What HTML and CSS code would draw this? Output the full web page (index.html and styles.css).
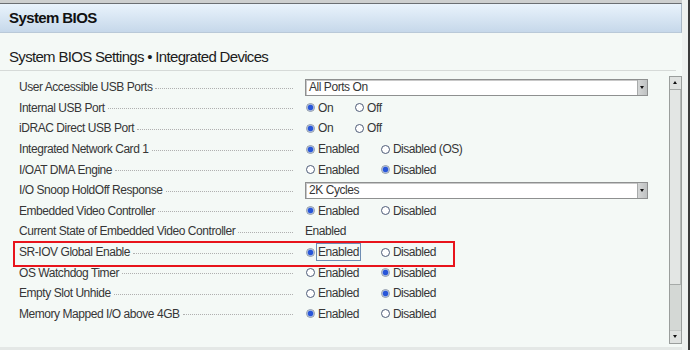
FILE: index.html
```html
<!DOCTYPE html>
<html>
<head>
<meta charset="utf-8">
<link rel="stylesheet" href="styles.css">
</head>
<body>
<div class="window">
  <div class="main">
    <div class="topstrip"></div>
    <div class="header">System BIOS</div>
    <div class="content">
      <div class="title">System BIOS Settings • Integrated Devices</div>
      <div class="body">
        <div class="rows">
          <div class="row">
            <div class="label"><span>User Accessible USB Ports</span><i class="leader"></i></div>
            <div class="ctrl"><div class="select"><span>All Ports On</span><b class="arrow"></b></div></div>
          </div>
          <div class="row">
            <div class="label"><span>Internal USB Port</span><i class="leader"></i></div>
            <div class="ctrl"><span class="opt"><i class="radio on"></i><span>On</span></span><span class="opt"><i class="radio"></i><span>Off</span></span></div>
          </div>
          <div class="row">
            <div class="label"><span>iDRAC Direct USB Port</span><i class="leader"></i></div>
            <div class="ctrl"><span class="opt"><i class="radio on"></i><span>On</span></span><span class="opt"><i class="radio"></i><span>Off</span></span></div>
          </div>
          <div class="row">
            <div class="label"><span>Integrated Network Card 1</span><i class="leader"></i></div>
            <div class="ctrl"><span class="opt"><i class="radio on"></i><span>Enabled</span></span><span class="opt"><i class="radio"></i><span>Disabled (OS)</span></span></div>
          </div>
          <div class="row">
            <div class="label"><span>I/OAT DMA Engine</span><i class="leader"></i></div>
            <div class="ctrl"><span class="opt"><i class="radio"></i><span>Enabled</span></span><span class="opt"><i class="radio on"></i><span>Disabled</span></span></div>
          </div>
          <div class="row">
            <div class="label"><span>I/O Snoop HoldOff Response</span><i class="leader"></i></div>
            <div class="ctrl"><div class="select"><span>2K Cycles</span><b class="arrow"></b></div></div>
          </div>
          <div class="row">
            <div class="label"><span>Embedded Video Controller</span><i class="leader"></i></div>
            <div class="ctrl"><span class="opt"><i class="radio on"></i><span>Enabled</span></span><span class="opt"><i class="radio"></i><span>Disabled</span></span></div>
          </div>
          <div class="row">
            <div class="label"><span>Current State of Embedded Video Controller</span><i class="leader"></i></div>
            <div class="ctrl"><span class="value">Enabled</span></div>
          </div>
          <div class="row marked">
            <div class="label"><span>SR-IOV Global Enable</span><i class="leader"></i></div>
            <div class="ctrl"><span class="opt"><i class="radio on"></i><span class="focus">Enabled</span></span><span class="opt"><i class="radio"></i><span>Disabled</span></span></div>
          </div>
          <div class="row">
            <div class="label"><span>OS Watchdog Timer</span><i class="leader"></i></div>
            <div class="ctrl"><span class="opt"><i class="radio"></i><span>Enabled</span></span><span class="opt"><i class="radio on"></i><span>Disabled</span></span></div>
          </div>
          <div class="row">
            <div class="label"><span>Empty Slot Unhide</span><i class="leader"></i></div>
            <div class="ctrl"><span class="opt"><i class="radio"></i><span>Enabled</span></span><span class="opt"><i class="radio on"></i><span>Disabled</span></span></div>
          </div>
          <div class="row">
            <div class="label"><span>Memory Mapped I/O above 4GB</span><i class="leader"></i></div>
            <div class="ctrl"><span class="opt"><i class="radio on"></i><span>Enabled</span></span><span class="opt"><i class="radio"></i><span>Disabled</span></span></div>
          </div>
        </div>
        <div class="scrollbar">
          <div class="sbtn up"></div>
          <div class="thumb"></div>
          <div class="track"></div>
          <div class="sbtn down"></div>
        </div>
      </div>
    </div>
  </div>
  <div class="edge"></div>
</div>
</body>
</html>
```

FILE: styles.css
```css
html, body {
  margin: 0;
  padding: 0;
}
body {
  width: 690px;
  height: 350px;
  overflow: hidden;
  font-family: "Liberation Sans", Arial, sans-serif;
  background: #f4f9f6;
}
.window {
  display: flex;
  height: 350px;
}
.main {
  width: 682px;
  display: flex;
  flex-direction: column;
}
.edge {
  flex: 1;
  background: #eef1ef;
  border-right: 2px solid #3a3a3a;
}
.topstrip {
  height: 3px;
  background: #cdcfcf;
}
.header {
  height: 28px;
  border-top: 1px solid #6a6e72;
  border-bottom: 1px solid #b9c9d8;
  border-right: 1px solid #a9b7c4;
  background: linear-gradient(#e9f3fc, #c6d8ea);
  font-weight: bold;
  font-size: 15px;
  letter-spacing: -0.6px;
  line-height: 28px;
  padding-left: 9px;
  color: #111;
}
.content {
  flex: 1;
  display: flex;
  flex-direction: column;
  background: #f4f9f6;
  border-bottom: 3px solid #e4e8e6;
}
.title {
  margin-right: 6px;
  border-bottom: 1px solid #d6dad8;
  font-size: 15px;
  letter-spacing: -0.68px;
  line-height: 24px;
  padding-top: 12px;
  box-sizing: border-box;
  height: 38px;
  padding-left: 9px;
  color: #1c1c1c;
}
.body {
  flex: 1;
  display: flex;
}
.rows {
  flex: 1;
  padding-top: 6px;
}
.row {
  height: 20.6px;
  display: grid;
  grid-template-columns: 293px 1fr;
  column-gap: 12px;
  align-items: center;
  font-size: 12px;
  letter-spacing: -0.45px;
  color: #363636;
  position: relative;
}
.row.marked::after {
  content: "";
  position: absolute;
  left: 13px;
  top: -1px;
  width: 438px;
  height: 22px;
  border: 2px solid #e8141c;
}
.label {
  display: flex;
  align-items: center;
  padding-left: 19px;
  white-space: nowrap;
}
.leader {
  flex: 1;
  height: 0;
  border-bottom: 1px dotted #b0b0b0;
  margin-left: 3px;
  margin-top: 2px;
}
.ctrl {
  display: flex;
  align-items: center;
  gap: 21px;
}
.opt {
  display: inline-flex;
  align-items: center;
  gap: 3px;
}
.radio {
  width: 7px;
  height: 7px;
  margin-left: 1px;
  border-radius: 50%;
  border: 1px solid #4e5c78;
  background: #fff;
}
.radio.on {
  border-color: #8a96a8;
  background: radial-gradient(circle, #2856d8 0 2.2px, #6d8ee0 2.8px, #e4e9f4 3.4px);
}
.focus {
  outline: 1px solid #6f8db3;
  outline-offset: 1px;
}
.value {
  padding-left: 0;
}
.select {
  width: 343px;
  height: 17px;
  box-sizing: border-box;
  border: 1px solid #8e9090;
  box-shadow: inset 1px 1px 0 #c8c8c8;
  background: #fff;
  display: flex;
  align-items: center;
  justify-content: space-between;
  padding-left: 3px;
}
.arrow {
  width: 9px;
  height: 15px;
  background: linear-gradient(90deg, #d4d6d6, #bfc2c2);
  border-left: 1px solid #a8abab;
  position: relative;
}
.arrow::after {
  content: "";
  position: absolute;
  left: 2px;
  top: 6px;
  border-left: 2.5px solid transparent;
  border-right: 2.5px solid transparent;
  border-top: 3px solid #111;
}
.scrollbar {
  width: 13px;
  margin-top: 5px;
  margin-bottom: 3px;
  box-sizing: border-box;
  border: 1px solid #9a9e9c;
  background: #d4d8d5;
  display: flex;
  flex-direction: column;
}
.sbtn {
  height: 12px;
  background: #dfe2e0;
  position: relative;
}
.sbtn.up {
  border-bottom: 1px solid #a6aaa8;
}
.sbtn.down {
  border-top: 1px solid #c4c8c6;
}
.sbtn.up::after,
.sbtn.down::after {
  content: "";
  position: absolute;
  left: 3px;
  top: 4px;
  border-left: 2.5px solid transparent;
  border-right: 2.5px solid transparent;
}
.sbtn.up::after {
  border-bottom: 3px solid #111;
}
.sbtn.down::after {
  border-top: 3px solid #111;
}
.thumb {
  height: 194px;
  background: #e3e6e4;
  border-bottom: 1px solid #a6aaa8;
  border-right: 1px solid #b4b8b6;
}
.track {
  flex: 1;
}
```
